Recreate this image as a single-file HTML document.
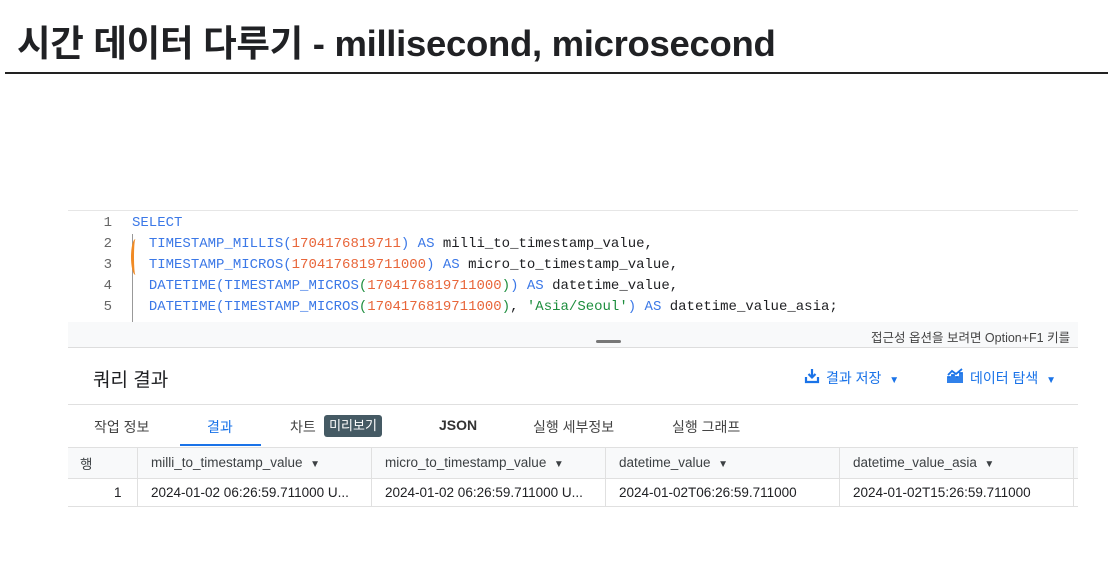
<!DOCTYPE html>
<html><head><meta charset="utf-8"><style>
body{margin:0;width:1108px;height:580px;background:#fff;position:relative;overflow:hidden;font-family:"Liberation Sans","Noto Sans CJK KR",sans-serif;color:#202124}
.a{position:absolute;white-space:nowrap}
.mono{font-family:"Liberation Mono","DejaVu Sans Mono",monospace;font-size:14px}
.k{color:#3b78e7}.n{color:#e8663a}.s{color:#1e8e3e}.g{color:#1e8e3e}
.ln{color:#666;width:20px;text-align:right}
.th{font-size:13.5px;color:#3c4043}
.td{font-size:13.5px;color:#202124}
</style></head><body>
<div class="a" style="left:17px;top:14px;font-size:36.5px;font-weight:bold;letter-spacing:-0.3px">시간 데이터 다루기 - millisecond, microsecond</div>
<div class="a" style="left:5px;top:72px;width:1103px;height:2px;background:#222"></div>

<div class="a" style="left:68px;top:210px;width:1010px;height:1px;background:#e6e6e6"></div>
<div class="a mono" style="left:92px;top:213px;line-height:21px">
<div class="ln">1</div><div class="ln">2</div><div class="ln">3</div><div class="ln">4</div><div class="ln">5</div></div>
<div class="a" style="left:132px;top:234px;width:1px;height:90px;background:#999"></div>
<div class="a" style="left:131px;top:239px;width:6px;height:36px;border-left:3px solid #f08a24;border-radius:50%/50%"></div>
<div class="a mono" style="left:132px;top:213px;line-height:21px">
<div class="k">SELECT</div>
<div>&nbsp;&nbsp;<span class="k">TIMESTAMP_MILLIS(</span><span class="n">1704176819711</span><span class="k">) AS</span> milli_to_timestamp_value,</div>
<div>&nbsp;&nbsp;<span class="k">TIMESTAMP_MICROS(</span><span class="n">1704176819711000</span><span class="k">) AS</span> micro_to_timestamp_value,</div>
<div>&nbsp;&nbsp;<span class="k">DATETIME(TIMESTAMP_MICROS</span><span class="g">(</span><span class="n">1704176819711000</span><span class="g">)</span><span class="k">) AS</span> datetime_value,</div>
<div>&nbsp;&nbsp;<span class="k">DATETIME(TIMESTAMP_MICROS</span><span class="g">(</span><span class="n">1704176819711000</span><span class="g">)</span>, <span class="s">'Asia/Seoul'</span><span class="k">) AS</span> datetime_value_asia;</div>
</div>
<div class="a" style="left:68px;top:322px;width:1010px;height:25px;background:#f8f9fa"></div>
<div class="a" style="left:596px;top:340px;width:25px;height:3px;background:#777;border-radius:2px"></div>
<div class="a" style="left:871px;top:327px;font-size:12.5px;color:#444">접근성 옵션을 보려면 Option+F1 키를</div>
<div class="a" style="left:68px;top:347px;width:1010px;height:1px;background:#ddd"></div>

<div class="a" style="left:93px;top:365px;font-size:19px">쿼리 결과</div>
<svg class="a" style="left:804px;top:368px" width="16" height="16" viewBox="0 0 16 16"><path d="M8 1v8M4.5 6l3.5 3.5L11.5 6" stroke="#1a73e8" stroke-width="2.2" fill="none"/><path d="M2 9v5h12V9" stroke="#1a73e8" stroke-width="2.2" fill="none"/></svg>
<div class="a" style="left:826px;top:368px;font-size:14px;color:#1a73e8">결과 저장 &nbsp;<span style="font-size:10px">▼</span></div>
<svg class="a" style="left:947px;top:368px" width="18" height="16" viewBox="0 0 18 16"><path d="M1 15V9h2v6M5 15V7h2v8M9 15V9h2v6M13 15V5h2v10M1 7l4-4 4 3 6-5" stroke="#1a73e8" stroke-width="1.8" fill="none"/></svg>
<div class="a" style="left:970px;top:368px;font-size:14px;color:#1a73e8">데이터 탐색 &nbsp;<span style="font-size:10px">▼</span></div>
<div class="a" style="left:68px;top:404px;width:1010px;height:1px;background:#e0e0e0"></div>

<div class="a" style="top:417px;left:94px;font-size:14px;color:#444">작업 정보</div>
<div class="a" style="top:417px;left:207px;font-size:14px;color:#1a73e8">결과</div>
<div class="a" style="left:180px;top:444px;width:81px;height:2px;background:#1a73e8"></div>
<div class="a" style="top:417px;left:290px;font-size:14px;color:#444">차트</div>
<div class="a" style="top:415px;left:324px;height:22px;width:58px;background:#455a64;border-radius:3px;color:#fff;font-size:13px;line-height:22px;text-align:center">미리보기</div>
<div class="a" style="top:417px;left:439px;font-size:14px;color:#333;font-weight:bold">JSON</div>
<div class="a" style="top:417px;left:533px;font-size:14px;color:#444">실행 세부정보</div>
<div class="a" style="top:417px;left:672px;font-size:14px;color:#444">실행 그래프</div>

<div class="a" style="left:68px;top:447px;width:1010px;height:30px;background:#f8f9fa;border-top:1px solid #e0e0e0;border-bottom:1px solid #e0e0e0"></div>
<div class="a" style="left:68px;top:506px;width:1010px;height:1px;background:#e0e0e0"></div>
<div class="a" style="left:137px;top:447px;width:1px;height:59px;background:#e0e0e0"></div>
<div class="a" style="left:371px;top:447px;width:1px;height:59px;background:#e0e0e0"></div>
<div class="a" style="left:605px;top:447px;width:1px;height:59px;background:#e0e0e0"></div>
<div class="a" style="left:839px;top:447px;width:1px;height:59px;background:#e0e0e0"></div>
<div class="a" style="left:1073px;top:447px;width:1px;height:59px;background:#e0e0e0"></div>
<div class="a th" style="left:80px;top:453px">행</div>
<div class="a th" style="left:151px;top:455px">milli_to_timestamp_value &nbsp;<span style="font-size:10px">▼</span></div>
<div class="a th" style="left:385px;top:455px">micro_to_timestamp_value &nbsp;<span style="font-size:10px">▼</span></div>
<div class="a th" style="left:619px;top:455px">datetime_value &nbsp;<span style="font-size:10px">▼</span></div>
<div class="a th" style="left:853px;top:455px">datetime_value_asia &nbsp;<span style="font-size:10px">▼</span></div>
<div class="a td" style="left:114px;top:485px">1</div>
<div class="a td" style="left:151px;top:485px">2024-01-02 06:26:59.711000 U...</div>
<div class="a td" style="left:385px;top:485px">2024-01-02 06:26:59.711000 U...</div>
<div class="a td" style="left:619px;top:485px">2024-01-02T06:26:59.711000</div>
<div class="a td" style="left:853px;top:485px">2024-01-02T15:26:59.711000</div>
</body></html>
